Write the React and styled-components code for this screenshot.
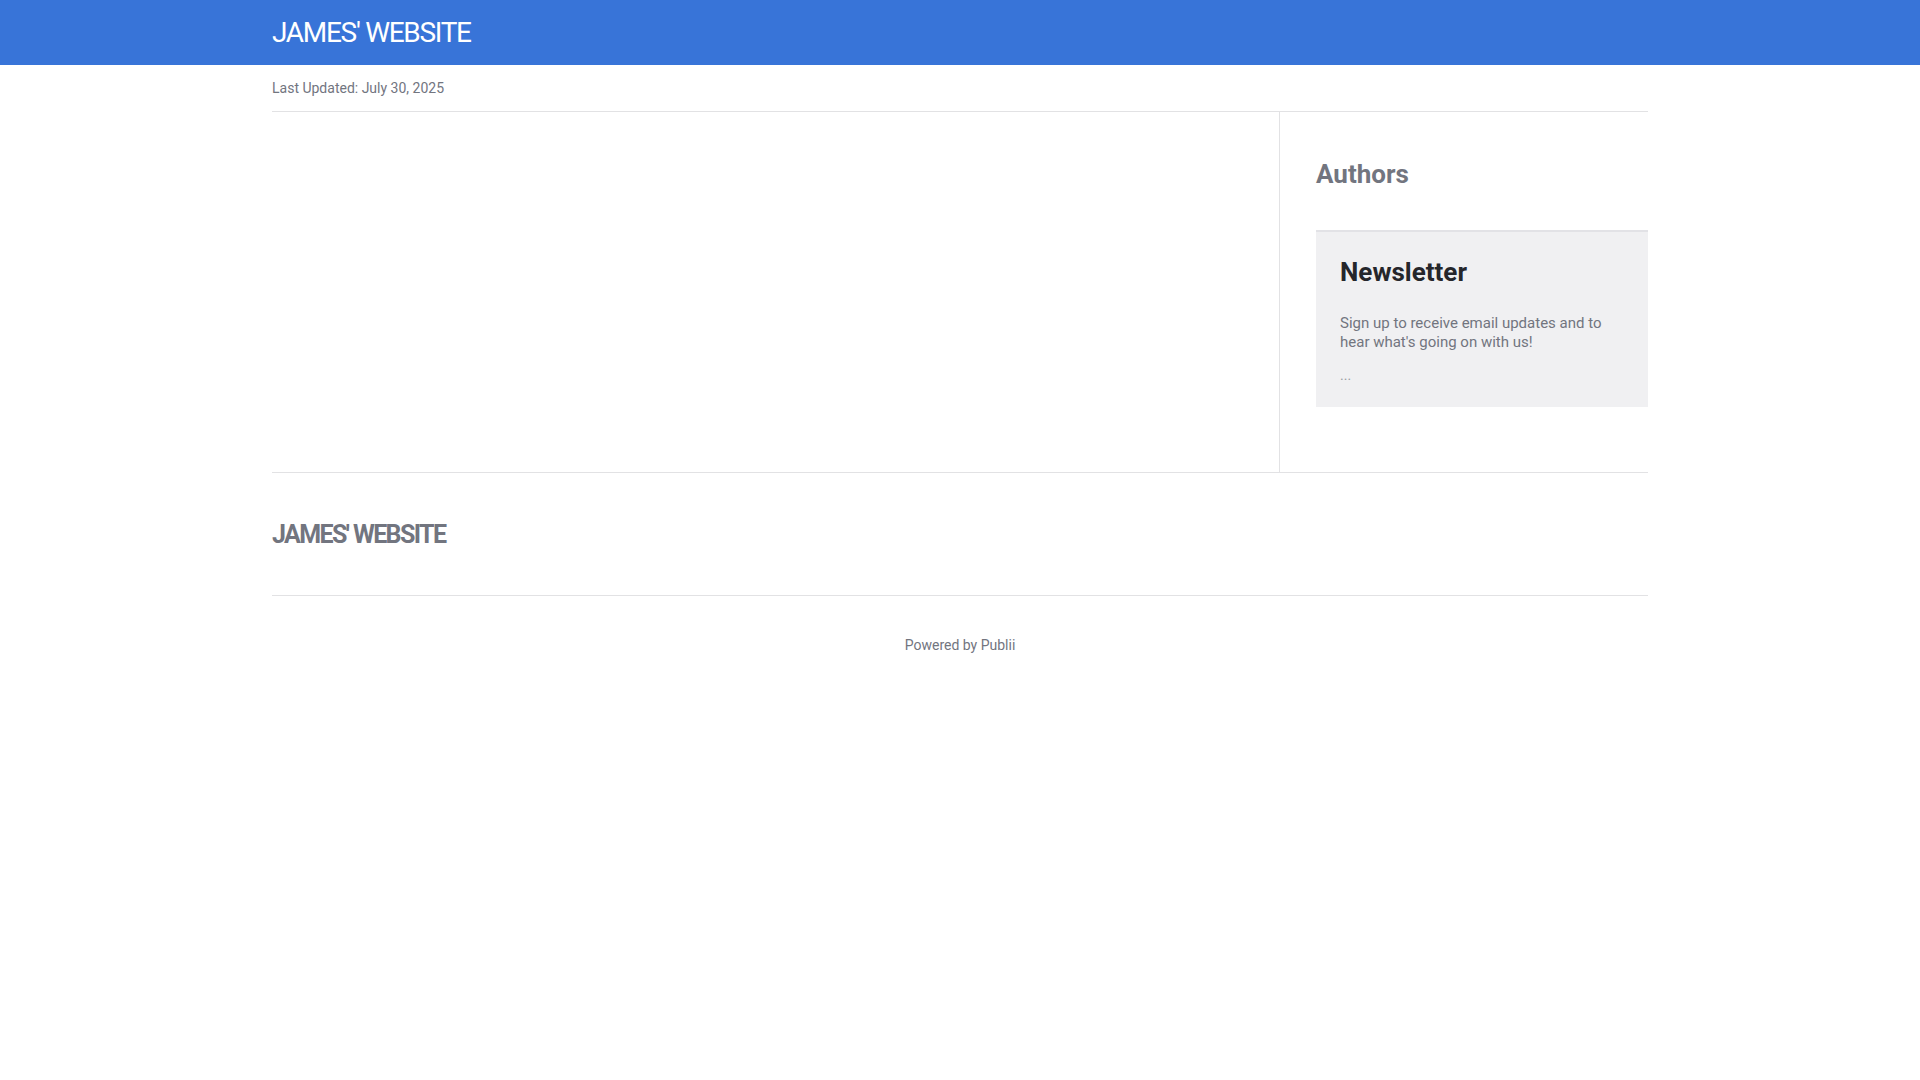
import React from "react";
import styled, { createGlobalStyle } from "styled-components";

const G = createGlobalStyle`
  body { margin: 0; font-family: Roboto, "Liberation Sans", sans-serif; background: #fff; color: #72757f; }
`;
const Header = styled.header`
  background: #3874d8; height: 65px; display: flex; align-items: center;
`;
const Wrap = styled.div`
  width: 1376px; margin: 0 auto;
`;
const Logo = styled.div`
  color: ${p => p.$footer ? "#72757f" : "#fff"};
  font-size: ${p => p.$footer ? "25px" : "28px"};
  font-weight: ${p => p.$footer ? 700 : 400};
  letter-spacing: ${p => p.$footer ? "-1.6px" : "-1.3px"};
`;
const Updated = styled.div`
  font-size: 14px; color: #72757f; height: 46px; line-height: 46px;
  border-bottom: 1px solid #e2e2e4;
`;
const Main = styled.div`
  display: grid; grid-template-columns: 1008px 1fr; min-height: 360px;
  border-bottom: 1px solid #e2e2e4;
`;
const Content = styled.div` border-right: 1px solid #e2e2e4; `;
const Side = styled.aside` padding: 44px 0 0 36px; `;
const H3 = styled.h3`
  margin: 0 0 38px; font-size: 26px; font-weight: 700; color: #72757f; line-height: 36px;
`;
const Box = styled.div`
  background: #f0f0f2; border-top: 2px solid #e2e2e6; padding: 22px 24px 22px;
`;
const H4 = styled.h4` margin: 0 0 24px; font-size: 26px; font-weight: 700; color: #25262b; line-height: 36px; `;
const P = styled.p` margin: 0 0 14px; font-size: 15px; line-height: 19px; color: #72757f; `;
const Dots = styled.p` margin: 0; font-size: 14px; line-height: 19px; color: #9a9ca3; `;
const FooterTop = styled.div`
  height: 122px; display: flex; align-items: center; border-bottom: 1px solid #e2e2e4; padding-bottom: 0;
`;
const Powered = styled.div` text-align: center; font-size: 14px; padding-top: 41px; color: #72757f; `;

export default function App() {
  return (
    <>
      <G />
      <Header><Wrap><Logo>JAMES' WEBSITE</Logo></Wrap></Header>
      <Wrap>
        <Updated>Last Updated: July 30, 2025</Updated>
        <Main>
          <Content />
          <Side>
            <H3>Authors</H3>
            <Box>
              <H4>Newsletter</H4>
              <P>Sign up to receive email updates and to hear what's going on with us!</P>
              <Dots>...</Dots>
            </Box>
          </Side>
        </Main>
        <FooterTop><Logo $footer>JAMES' WEBSITE</Logo></FooterTop>
        <Powered>Powered by Publii</Powered>
      </Wrap>
    </>
  );
}
